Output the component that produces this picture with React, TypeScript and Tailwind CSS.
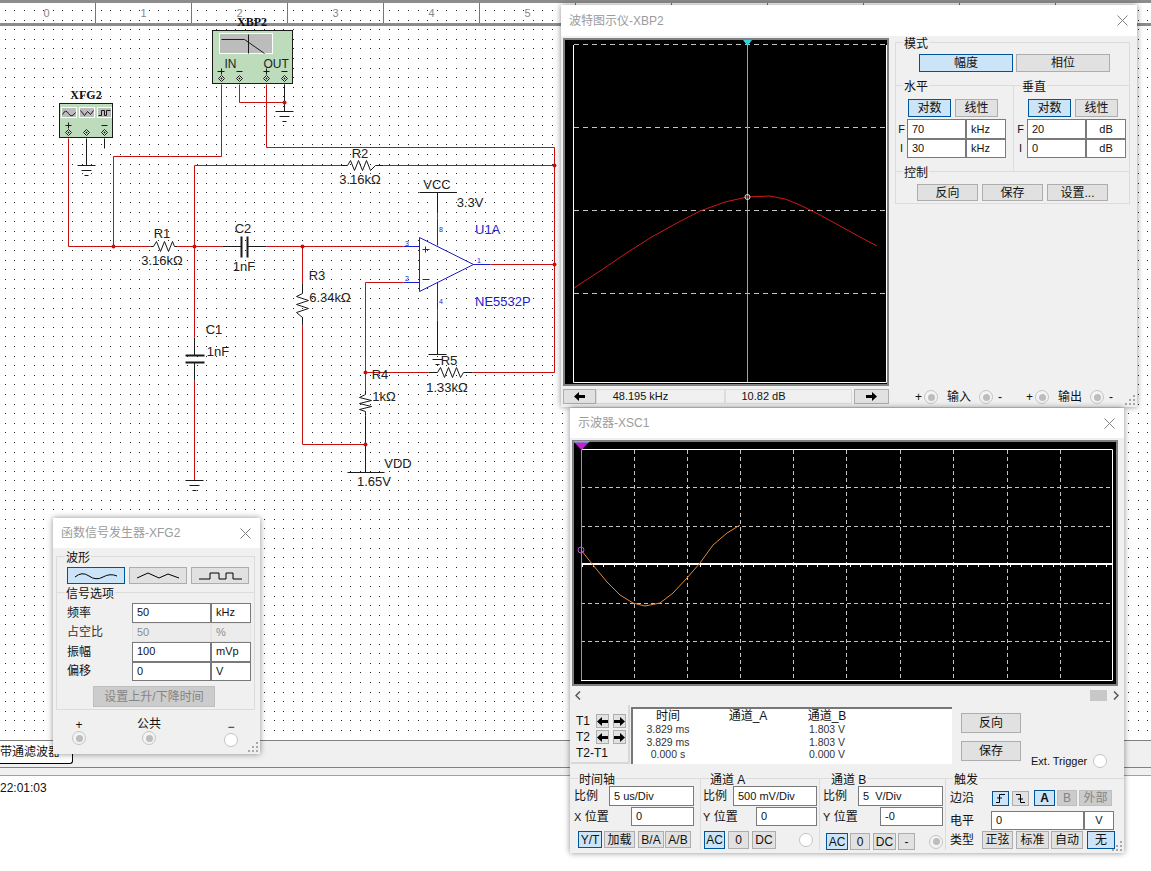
import type { ReactNode } from 'react';

const RED = '#c80f0f';
const INK = '#1a1a1a';
const BLUE = '#1c1cc8';

function Wire({ d, c = RED, w = 1 }: { d: string; c?: string; w?: number }) {
    return <path d={d} fill="none" stroke={c} strokeWidth={w} />;
}

function Dot({ x, y }: { x: number; y: number }) {
    return <circle cx={x} cy={y} r={2} fill={RED} />;
}

function Ground({ x, y, w = 9 }: { x: number; y: number; w?: number }) {
    return <Wire c={INK} d={`M${x - w} ${y}H${x + w}M${Math.round(x - w * 0.6)} ${y + 5}H${Math.round(x + w * 0.6)}M${Math.round(x - w * 0.25)} ${y + 10}H${Math.round(x + w * 0.25)}`} />;
}

function Label({ x, y, children, c, anchor = 'middle' }: { x: number; y: number; children: ReactNode; c?: 'blue'; anchor?: 'middle' | 'start' }) {
    return (
        <text x={x} y={y} textAnchor={anchor} className={c === 'blue' ? 'fill-[#1c1cc8] text-[13px]' : 'fill-[#222222] text-[13px]'}>
            {children}
        </text>
    );
}

function Pin({ x, y }: { x: number; y: number }) {
    return (
        <g>
            <path d={`M${x} ${y - 3}L${x + 3} ${y}L${x} ${y + 3}L${x - 3} ${y}Z`} fill="#d8ead8" stroke={INK} strokeWidth={1} />
            <circle cx={x} cy={y} r={1} fill={INK} />
        </g>
    );
}

const DOT_X = [5, 14, 24, 34, 43];
const DOT_Y = [0, 10, 20, 29, 39];

// the schematic, drawn in page coordinates
function Schematic() {
    return (
        <svg className="absolute left-0 top-0 w-[1151px] h-[740px]" viewBox="0 0 1151 740">
            <defs>
                <pattern id="grid" width={48} height={48} patternUnits="userSpaceOnUse">
                    {DOT_X.flatMap((x) => DOT_Y.map((y) => <rect key={`${x}-${y}`} x={x} y={y} width={1} height={1} fill="#222222" />))}
                </pattern>
            </defs>
            <rect x={0} y={3} width={1151} height={20} fill="url(#grid)" />
            <rect x={0} y={26} width={1151} height={714} fill="url(#grid)" />

            {/* half pixel shift keeps the 1px strokes crisp */}
            <g transform="translate(0.5 0.5)">
                {/* XBP2 */}
                <rect x={212} y={30} width={80} height={53} fill="#bcdcbc" stroke={INK} />
                <rect x={219} y={33} width={53} height={20} fill="#bcbcbc" stroke="#ffffff" />
                <Wire c={INK} d="M221 39H244L264 53M248 34V53" />
                <text x={224} y={67} className="fill-[#222222] text-[12px]">IN</text>
                <text x={263} y={67} className="fill-[#222222] text-[12px]">OUT</text>
                <Wire c={INK} d="M217 71H224M221 68V74M236 71H242M263 71H269M266 68V74M281 71H287" />

                {/* XFG2 */}
                <rect x={59} y={103} width={53} height={34} fill="#bcdcbc" stroke={INK} />
                <rect x={61} y={107} width={15} height={10} fill="#bcbcbc" stroke="#ffffff" />
                <rect x={79} y={107} width={15} height={10} fill="#bcbcbc" stroke="#ffffff" />
                <rect x={97} y={107} width={14} height={10} fill="#bcbcbc" stroke="#ffffff" />
                <Wire c={INK} d="M62 114Q65 108 68 113T75 112M80 110L84 115L87 111L90 114L93 110M98 115H101V110H104V115H106V110H110" />
                <Wire c={INK} d="M65 125H71M68 122V128M101 125H107" />

                {/* red nets */}
                <Wire d="M68 138V246H150M177 246H222M266 246H403M113 246V156H221V84" />
                <Wire d="M266 84V147H554V372H472" />
                <Wire d="M194 246V165H340M383 165H554M490 264H554" />
                <Wire d="M239 84V102H284" />
                <Wire d="M194 246V337M194 380V480" />
                <Wire d="M302 246V283M302 325V444H365" />
                <Wire d="M403 282H365V372H428M365 372V390" />
                <Wire d="M437 213V218M437 310V320" />
                {/* black leads */}
                <Wire c={INK} d="M284 84V111M86 138V165M104 138V148M437 192V213M437 320V354" />
                <Wire c={INK} d="M419 192H456M347 472H384M365 415V472" />
                <Wire c={INK} d="M150 246H153M174 246H177M222 246H241M247 246H266M340 165H347M375 165H383M428 372H437M463 372H472" />
                <Wire c={INK} d="M194 337V355M194 362V380M302 283V293M302 317V325M365 390V394M365 411V415" />
                {/* resistors */}
                <Wire c={INK} d="M153 246L156 241L160 251L164 241L168 251L172 241L174 246" />
                <Wire c={INK} d="M347 165L350 160L354 170L358 160L362 170L366 160L370 170L375 165" />
                <Wire c={INK} d="M437 372L440 367L444 377L448 367L452 377L456 367L460 377L463 372" />
                <Wire c={INK} d="M302 293L296 296L308 300L296 304L308 308L296 312L302 317" />
                <Wire c={INK} d="M365 394L359 397L371 400L359 403L371 406L359 409L365 411" />
                {/* capacitors */}
                <Wire c={INK} w={2} d="M241 236V257M247 236V257M185 355H204M185 362H204" />
                {/* grounds */}
                <Ground x={284} y={111} />
                <Ground x={86} y={165} />
                <Ground x={194} y={480} />
                <Ground x={437} y={354} />
                {/* op amp */}
                <path d="M419 237V291L473 264Z" fill="none" stroke={BLUE} strokeWidth={1} />
                <Wire c={BLUE} d="M403 246H419M403 282H419M473 264H490M437 218V245M437 282V310M422 249H429M425 246V252M422 279H429" />
                {[[113, 246], [194, 246], [302, 246], [284, 102], [554, 165], [554, 264], [365, 372], [365, 444]].map(([x, y]) => (
                    <Dot key={`${x}-${y}`} x={x} y={y} />
                ))}
                <Pin x={221} y={78} />
                <Pin x={239} y={78} />
                <Pin x={266} y={78} />
                <Pin x={284} y={78} />
                <Pin x={68} y={132} />
                <Pin x={86} y={132} />
                <Pin x={104} y={132} />
            </g>

            <text x={405} y={246} className="fill-[#1c1cc8] text-[7px]">3</text>
            <text x={405} y={281} className="fill-[#1c1cc8] text-[7px]">2</text>
            <text x={477} y={263} className="fill-[#1c1cc8] text-[7px]">1</text>
            <text x={439} y={232} className="fill-[#1c1cc8] text-[7px]">8</text>
            <text x={439} y={304} className="fill-[#1c1cc8] text-[7px]">4</text>
            <text x={252} y={26} textAnchor="middle" className="fill-[#111111] text-[12px] font-bold [font-family:'Liberation_Serif',serif]">XBP2</text>
            <text x={86} y={99} textAnchor="middle" className="fill-[#111111] text-[12px] font-bold [font-family:'Liberation_Serif',serif]">XFG2</text>

            <Label x={162} y={238}>R1</Label>
            <Label x={162} y={265}>3.16kΩ</Label>
            <Label x={360} y={158}>R2</Label>
            <Label x={360} y={184}>3.16kΩ</Label>
            <Label x={437} y={189}>VCC</Label>
            <Label x={470} y={207}>3.3V</Label>
            <Label x={475} y={234} anchor="start" c="blue">U1A</Label>
            <Label x={475} y={306} anchor="start" c="blue">NE5532P</Label>
            <Label x={243} y={233}>C2</Label>
            <Label x={244} y={271}>1nF</Label>
            <Label x={317} y={280}>R3</Label>
            <Label x={330} y={302}>6.34kΩ</Label>
            <Label x={214} y={334}>C1</Label>
            <Label x={218} y={356}>1nF</Label>
            <Label x={449} y={365}>R5</Label>
            <Label x={447} y={392}>1.33kΩ</Label>
            <Label x={380} y={379}>R4</Label>
            <Label x={384} y={401}>1kΩ</Label>
            <Label x={398} y={468}>VDD</Label>
            <Label x={374} y={486}>1.65V</Label>
        </svg>
    );
}

function Btn({ active, disabled, className, children }: { active?: boolean; disabled?: boolean; className: string; children?: ReactNode }) {
    const tone = active
        ? 'bg-[#cce4f7] border-[#005499]'
        : disabled
          ? 'bg-[#cccccc] border-[#bfbfbf] text-[#858585]'
          : 'bg-[#e1e1e1] border-[#adadad]';
    return <div className={`flex items-center justify-center border shrink-0 text-[12px] leading-none ${tone} ${className}`}>{children}</div>;
}

function Box({ className, children, disabled, center }: { className: string; children?: ReactNode; disabled?: boolean; center?: boolean }) {
    return (
        <div
            className={`flex items-center shrink-0 border text-[11px] leading-none ${center ? 'justify-center' : 'pl-[4px]'} ${
                disabled ? 'bg-[#ececec] border-[#e4e4e4] text-[#8d8d8d]' : 'bg-white border-[#7a7a7a]'
            } ${className}`}
        >
            {children}
        </div>
    );
}

function Term({ on = true }: { on?: boolean }) {
    return (
        <div className={`flex items-center justify-center w-[14px] h-[14px] shrink-0 rounded-full border border-[#c4c4c4] ${on ? 'bg-[#f3f3f3]' : 'bg-white'}`}>
            {on && <div className="w-[7px] h-[7px] rounded-full bg-[#bdbdbd]" />}
        </div>
    );
}

function GroupLabel({ children, className = '' }: { children: ReactNode; className?: string }) {
    return <div className={`w-fit h-[14px] -mt-[6px] px-[1px] bg-[#f0f0f0] text-[12px] leading-[14px] ${className}`}>{children}</div>;
}

function Grip() {
    return (
        <svg className="absolute right-[1px] bottom-[1px] w-[12px] h-[12px]" viewBox="0 0 12 12">
            <path d="M9 1h2v2H9zM5 5h2v2H5zM9 5h2v2H9zM1 9h2v2H1zM5 9h2v2H5zM9 9h2v2H9z" fill="#a8a8a8" />
        </svg>
    );
}

function TitleBar({ title, h }: { title: string; h: string }) {
    return (
        <div className={`flex items-center justify-between shrink-0 bg-white pl-[8px] pr-[9px] text-[12px] text-[#9b9b9b] ${h}`}>
            <span>{title}</span>
            <svg className="w-[11px] h-[11px]" viewBox="0 0 11 11">
                <path d="M0.500 0.500L10.500 10.500M10.500 0.500L0.500 10.500" stroke="#808080" strokeWidth={1} />
            </svg>
        </div>
    );
}

function Arrow({ right }: { right?: boolean }) {
    return (
        <svg className="w-[11px] h-[9px]" viewBox="0 0 11 9">
            <path d={right ? 'M0 3H6V0L11 4.500L6 9V6H0Z' : 'M11 3H5V0L0 4.500L5 9V6H11Z'} fill="#000000" />
        </svg>
    );
}

function BodePlot() {
    return (
        <svg className="w-[326px] h-[348px] block" viewBox="563 38 326 348">
            <rect x={564} y={39} width={324} height={346} fill="#000000" stroke="#808080" strokeWidth={2} />
            <path d="M573.500 45V382.500H886.500V45" fill="none" stroke="#ffffff" />
            <path d="M574 44.500H886M574 127.500H886M574 210.500H886M574 293.500H886" stroke="#c4c4c4" strokeDasharray="5 4" />
            <path d="M747.500 42V382" stroke="#35cfe0" />
            <path d="M743 40H752L747.500 46Z" fill="#35cfe0" />
            <polyline
                points="574,288 600,271 625,254 650,238 675,224 700,211 725,202 747,197 770,196 785,199 800,205 820,215 840,226 860,237 877,246"
                fill="none"
                stroke="#d01818"
            />
            <circle cx={747.500} cy={197} r={2.500} fill="none" stroke="#cfeef2" />
        </svg>
    );
}

function ScopePlot() {
    const vx = [634, 687, 740, 793, 846, 900, 953, 1007, 1060];
    const hy = [487, 526, 603, 641];
    const ticks = Array.from({ length: 50 }, (_, i) => Math.round(582 + i * 10.7) + 0.5);
    return (
        <svg className="w-[546px] h-[246px] block" viewBox="572 440 546 246">
            <rect x={573} y={441} width={544} height={244} fill="#000000" stroke="#808080" strokeWidth={2} />
            <path d="M581 449.500H1112.500V680.500H581" fill="none" stroke="#ffffff" />
            {vx.map((x) => (
                <path key={x} d={`M${x + 0.5} 450V680`} stroke="#c4c4c4" strokeDasharray="4 3" />
            ))}
            {hy.map((y) => (
                <path key={y} d={`M581 ${y + 0.5}H1112`} stroke="#c4c4c4" strokeDasharray="4 3" />
            ))}
            <path d="M581 564H1112" stroke="#ffffff" strokeWidth={2} />
            {ticks.map((x) => (
                <path key={x} d={`M${x} 565V567`} stroke="#ffffff" />
            ))}
            <path d="M581.500 442V680" stroke="#3fd24a" />
            <polyline
                points="581,550 593,565 607,582 620,595 633,603 645,606 660,603 673,593 687,578 700,563 713,545 727,533 740,525"
                fill="none"
                stroke="#e58a33"
            />
            <circle cx={581} cy={550} r={3} fill="none" stroke="#c050d8" />
            <path d="M573 441H590L581.500 450Z" fill="#c21fd0" />
            <path d="M573 441H590L589 442.500H574Z" fill="#57c7d6" />
        </svg>
    );
}

function BodeWindow() {
    return (
        <div className="absolute left-[561px] top-[5px] w-[576px] h-[402px] flex flex-col bg-[#f0f0f0] shadow-[0_0_6px_rgba(0,0,0,0.45)]">
            <TitleBar title="波特图示仪-XBP2" h="h-[31px]" />
            <div className="flex flex-1 mt-[2px]">
                <div className="w-[330px] pl-[2px] shrink-0">
                    <BodePlot />
                    <div className="flex items-center h-[17px] mt-[2px] text-[11px]">
                        <Btn className="w-[33px] h-[15px]">
                            <Arrow />
                        </Btn>
                        <div className="w-[129px] h-[15px] pr-[40px] flex items-center justify-center border border-[#dcdcdc]">48.195 kHz</div>
                        <div className="w-[127px] h-[15px] pr-[50px] flex items-center justify-center border border-[#dcdcdc]">10.82 dB</div>
                        <Btn className="w-[35px] h-[15px] ml-[2px]">
                            <Arrow right />
                        </Btn>
                    </div>
                </div>
                <div className="flex flex-col flex-1 pl-[4px]">
                    <div className="w-[235px] h-[162px] mt-[4px] border border-[#dcdcdc] flex flex-col">
                        <div className="flex flex-col h-[43px] border-b border-[#dcdcdc]">
                            <GroupLabel className="ml-[7px]">模式</GroupLabel>
                            <div className="flex gap-[3px] pl-[23px] mt-[3px]">
                                <Btn active className="w-[94px] h-[18px]">幅度</Btn>
                                <Btn className="w-[94px] h-[18px]">相位</Btn>
                            </div>
                        </div>
                        <div className="flex h-[86px] border-b border-[#dcdcdc]">
                            <div className="w-[118px] border-r border-[#dcdcdc]">
                                <GroupLabel className="ml-[7px]">水平</GroupLabel>
                                <div className="flex gap-[4px] pl-[12px] mt-[5px]">
                                    <Btn active className="w-[43px] h-[18px]">对数</Btn>
                                    <Btn className="w-[43px] h-[18px]">线性</Btn>
                                </div>
                                <div className="flex items-center mt-[2px] text-[11px]">
                                    <span className="w-[11px] text-center">F</span>
                                    <Box className="w-[59px] h-[20px]">70</Box>
                                    <Box className="w-[40px] h-[20px]">kHz</Box>
                                </div>
                                <div className="flex items-center text-[11px]">
                                    <span className="w-[11px] text-center">I</span>
                                    <Box className="w-[59px] h-[19px]">30</Box>
                                    <Box className="w-[40px] h-[19px]">kHz</Box>
                                </div>
                            </div>
                            <div className="flex-1">
                                <GroupLabel className="ml-[7px]">垂直</GroupLabel>
                                <div className="flex gap-[4px] pl-[14px] mt-[5px]">
                                    <Btn active className="w-[43px] h-[18px]">对数</Btn>
                                    <Btn className="w-[43px] h-[18px]">线性</Btn>
                                </div>
                                <div className="flex items-center mt-[2px] text-[11px]">
                                    <span className="w-[13px] text-center">F</span>
                                    <Box className="w-[59px] h-[20px]">20</Box>
                                    <Box center className="w-[40px] h-[20px]">dB</Box>
                                </div>
                                <div className="flex items-center text-[11px]">
                                    <span className="w-[13px] text-center">I</span>
                                    <Box className="w-[59px] h-[19px]">0</Box>
                                    <Box center className="w-[40px] h-[19px]">dB</Box>
                                </div>
                            </div>
                        </div>
                        <GroupLabel className="ml-[7px]">控制</GroupLabel>
                        <div className="flex gap-[4px] pl-[21px] mt-[4px]">
                            <Btn className="w-[61px] h-[17px]">反向</Btn>
                            <Btn className="w-[61px] h-[17px]">保存</Btn>
                            <Btn className="w-[61px] h-[17px]">设置...</Btn>
                        </div>
                    </div>
                    <div className="flex items-center h-[16px] mt-[185px] text-[12px]">
                        <span className="ml-[20px] w-[9px]">+</span>
                        <Term />
                        <span className="ml-[9px] w-[30px]">输入</span>
                        <span className="ml-[2px]"><Term /></span>
                        <span className="ml-[5px] w-[16px]">-</span>
                        <span className="ml-[12px] w-[9px]">+</span>
                        <Term />
                        <span className="ml-[9px] w-[30px]">输出</span>
                        <span className="ml-[2px]"><Term /></span>
                        <span className="ml-[5px]">-</span>
                    </div>
                </div>
            </div>
            <Grip />
        </div>
    );
}

function ScopeWindow() {
    return (
        <div className="absolute left-[570px] top-[408px] w-[554px] h-[445px] flex flex-col bg-[#f0f0f0] shadow-[0_0_6px_rgba(0,0,0,0.45)]">
            <TitleBar title="示波器-XSC1" h="h-[30px]" />
            <div className="pl-[2px] mt-[2px]">
                <ScopePlot />
            </div>
            <div className="flex items-center h-[17px] mt-[1px] pl-[5px] pr-[5px] text-[#555555]">
                <svg className="w-[6px] h-[9px]" viewBox="0 0 6 9">
                    <path d="M5 0.500L1 4.500L5 8.500" fill="none" stroke="#555555" strokeWidth={1.500} />
                </svg>
                <div className="ml-auto w-[17px] h-[11px] bg-[#c8c8c8]" />
                <svg className="w-[6px] h-[9px] ml-[6px]" viewBox="0 0 6 9">
                    <path d="M1 0.500L5 4.500L1 8.500" fill="none" stroke="#555555" strokeWidth={1.500} />
                </svg>
            </div>
            <div className="flex h-[61px] text-[12px]">
                <div className="w-[59px] h-[59px] ml-[1px] mt-[1px] border-r-2 border-b-2 border-[#d8d8d8] pl-[5px] pt-[8px] shrink-0">
                    <div className="flex items-center h-[16px]">
                        <span className="w-[20px]">T1</span>
                        <Btn className="w-[13px] h-[14px]"><Arrow /></Btn>
                        <Btn className="w-[13px] h-[14px] ml-[4px]"><Arrow right /></Btn>
                    </div>
                    <div className="flex items-center h-[16px]">
                        <span className="w-[20px]">T2</span>
                        <Btn className="w-[13px] h-[14px]"><Arrow /></Btn>
                        <Btn className="w-[13px] h-[14px] ml-[4px]"><Arrow right /></Btn>
                    </div>
                    <div className="mt-[1px] h-[14px] leading-[14px]">T2-T1</div>
                </div>
                <div className="w-[321px] h-[57px] ml-[1px] mt-[3px] bg-white border-l-2 border-t-2 border-[#777777] grid grid-cols-[70px_90px_68px_1fr] grid-rows-[14px_13px_12px_13px] text-[10.500px] leading-[13px] text-center text-[#333333]">
                    <span className="text-[12px] leading-[14px] text-[#111111]">时间</span>
                    <span className="text-[12px] leading-[14px] text-[#111111]">通道_A</span>
                    <span className="text-[12px] leading-[14px] text-[#111111]">通道_B</span>
                    <span />
                    <span>3.829 ms</span>
                    <span />
                    <span>1.803 V</span>
                    <span />
                    <span>3.829 ms</span>
                    <span />
                    <span>1.803 V</span>
                    <span />
                    <span>0.000 s</span>
                    <span />
                    <span>0.000 V</span>
                    <span />
                </div>
                <div className="ml-[9px] mt-[9px] flex flex-col gap-[8px]">
                    <Btn className="w-[60px] h-[20px]">反向</Btn>
                    <Btn className="w-[60px] h-[20px]">保存</Btn>
                </div>
                <div className="ml-[10px] self-end mb-[-4px] flex items-center text-[11px] whitespace-nowrap">
                    Ext. Trigger
                    <span className="ml-[6px]"><Term on={false} /></span>
                </div>
            </div>
            <div className="flex h-[72px] mt-[13px] text-[12px]">
                <div className="w-[131px] border-t border-r border-[#dcdcdc] pl-[4px]">
                    <GroupLabel className="ml-[4px]">时间轴</GroupLabel>
                    <div className="flex items-center -mt-[1px]">
                        <span className="w-[35px]">比例</span>
                        <Box className="w-[85px] h-[20px]">5 us/Div</Box>
                    </div>
                    <div className="flex items-center mt-[1px]">
                        <span className="w-[57px]"><span className="text-[11px]">X</span> 位置</span>
                        <Box className="w-[63px] h-[19px]">0</Box>
                    </div>
                    <div className="flex mt-[5px] ml-[4px]">
                        <Btn active className="w-[24px] h-[17px] text-[11px]">Y/T</Btn>
                        <Btn className="w-[31px] h-[17px] ml-[2px]">加载</Btn>
                        <Btn className="w-[26px] h-[17px] ml-[3px] text-[11px]">B/A</Btn>
                        <Btn className="w-[26px] h-[17px] ml-[1px] text-[11px]">A/B</Btn>
                    </div>
                </div>
                <div className="w-[119px] border-t border-r border-[#dcdcdc] pl-[2px]">
                    <GroupLabel className="ml-[6px]">通道 A</GroupLabel>
                    <div className="flex items-center -mt-[1px]">
                        <span className="w-[30px]">比例</span>
                        <Box className="w-[84px] h-[20px]">500 mV/Div</Box>
                    </div>
                    <div className="flex items-center mt-[1px]">
                        <span className="w-[53px]"><span className="text-[11px]">Y</span> 位置</span>
                        <Box className="w-[61px] h-[19px]">0</Box>
                    </div>
                    <div className="flex items-center mt-[5px] ml-[1px]">
                        <Btn active className="w-[21px] h-[18px] text-[11px]">AC</Btn>
                        <Btn className="w-[21px] h-[18px] ml-[3px] text-[11px]">0</Btn>
                        <Btn className="w-[24px] h-[18px] ml-[3px] text-[11px]">DC</Btn>
                        <span className="ml-[23px]"><Term on={false} /></span>
                    </div>
                </div>
                <div className="w-[126px] border-t border-r border-[#dcdcdc] pl-[3px]">
                    <GroupLabel className="ml-[7px]">通道 B</GroupLabel>
                    <div className="flex items-center -mt-[1px]">
                        <span className="w-[35px]">比例</span>
                        <Box className="w-[85px] h-[20px]">5&nbsp;&nbsp;V/Div</Box>
                    </div>
                    <div className="flex items-center mt-[1px]">
                        <span className="w-[57px]"><span className="text-[11px]">Y</span> 位置</span>
                        <Box className="w-[63px] h-[19px]">-0</Box>
                    </div>
                    <div className="flex items-center mt-[7px] ml-[3px]">
                        <Btn active className="w-[22px] h-[17px] text-[11px]">AC</Btn>
                        <Btn className="w-[20px] h-[17px] ml-[2px] text-[11px]">0</Btn>
                        <Btn className="w-[23px] h-[17px] ml-[3px] text-[11px]">DC</Btn>
                        <Btn className="w-[17px] h-[17px] ml-[2px] text-[11px]">-</Btn>
                        <span className="ml-[14px]"><Term /></span>
                    </div>
                </div>
                <div className="flex-1 border-t border-[#dcdcdc] pl-[4px]">
                    <GroupLabel className="ml-[3px]">触发</GroupLabel>
                    <div className="flex items-center mt-[2px]">
                        <span className="w-[42px]">边沿</span>
                        <Btn active className="w-[17px] h-[15px]">
                            <svg className="w-[9px] h-[9px]" viewBox="0 0 9 9">
                                <path d="M0 8.500H3.500V0.500H9M1 4H6" fill="none" stroke="#000000" />
                            </svg>
                        </Btn>
                        <Btn className="w-[17px] h-[15px] ml-[3px]">
                            <svg className="w-[9px] h-[9px]" viewBox="0 0 9 9">
                                <path d="M0 0.500H4.500V8.500H9M2 5H7" fill="none" stroke="#000000" />
                            </svg>
                        </Btn>
                        <Btn active className="w-[21px] h-[16px] ml-[5px] text-[11px] font-bold">A</Btn>
                        <Btn disabled className="w-[20px] h-[16px] ml-[2px] text-[11px]">B</Btn>
                        <Btn disabled className="w-[33px] h-[16px] ml-[2px]">外部</Btn>
                    </div>
                    <div className="flex items-center mt-[4px]">
                        <span className="w-[41px]">电平</span>
                        <Box className="w-[93px] h-[19px]">0</Box>
                        <Box center className="w-[30px] h-[19px]">V</Box>
                    </div>
                    <div className="flex items-center mt-[1px]">
                        <span className="w-[32px]">类型</span>
                        <Btn className="w-[31px] h-[18px]">正弦</Btn>
                        <Btn className="w-[33px] h-[18px] ml-[3px]">标准</Btn>
                        <Btn className="w-[32px] h-[18px] ml-[2px]">自动</Btn>
                        <Btn active className="w-[28px] h-[18px] ml-[4px]">无</Btn>
                    </div>
                </div>
            </div>
            <Grip />
        </div>
    );
}

function Wave({ d }: { d: string }) {
    return (
        <svg className="w-[46px] h-[10px]" viewBox="0 0 46 10">
            <path d={d} fill="none" stroke="#000000" />
        </svg>
    );
}

function GenRow({ label, value, unit, disabled }: { label: string; value: string; unit: string; disabled?: boolean }) {
    return (
        <div className={`flex items-center h-[19.500px] pl-[10px] ${disabled ? 'text-[#333333]' : ''}`}>
            <span className="w-[65px]">{label}</span>
            <Box disabled={disabled} className="w-[79px] h-[19.500px]">{value}</Box>
            <Box disabled={disabled} className="w-[40px] h-[19.500px]">{unit}</Box>
        </div>
    );
}

function GeneratorWindow() {
    return (
        <div className="absolute left-[53px] top-[518px] w-[207px] h-[236px] flex flex-col bg-[#f0f0f0] text-[12px] shadow-[0_0_6px_rgba(0,0,0,0.45)]">
            <TitleBar title="函数信号发生器-XFG2" h="h-[30px]" />
            <div className="w-[199px] h-[154px] mt-[8px] ml-[3px] border border-[#dcdcdc]">
                <GroupLabel className="ml-[8px]">波形</GroupLabel>
                <div className="flex gap-[4px] pl-[10px] mt-[2px]">
                    <Btn active className="w-[58px] h-[17px]">
                        <Wave d="M2 6Q9 0 16 5T30 6T44 5" />
                    </Btn>
                    <Btn className="w-[58px] h-[17px]">
                        <Wave d="M2 7L13 2L24 7L33 3L44 7" />
                    </Btn>
                    <Btn className="w-[58px] h-[17px]">
                        <Wave d="M2 8H13V2H22V8H29V2H36V8H45" />
                    </Btn>
                </div>
                <div className="mt-[8px] border-t border-[#dcdcdc]">
                    <GroupLabel className="ml-[8px]">信号选项</GroupLabel>
                    <div className="mt-[2px]">
                        <GenRow label="频率" value="50" unit="kHz" />
                        <GenRow label="占空比" value="50" unit="  %" disabled />
                        <GenRow label="振幅" value="100" unit="mVp" />
                        <GenRow label="偏移" value="0" unit=" V" />
                    </div>
                    <Btn disabled className="w-[122px] h-[21px] ml-[36px] mt-[5px]">设置上升/下降时间</Btn>
                </div>
            </div>
            <div className="flex items-end h-[35px]">
                <div className="flex flex-col items-center w-[20px] ml-[16px]">
                    <span className="h-[11px] leading-[10px]">+</span>
                    <Term />
                </div>
                <div className="flex flex-col items-center w-[40px] ml-[40px] whitespace-nowrap">
                    <span className="h-[13px] leading-[12px]">公共</span>
                    <Term />
                </div>
                <div className="flex flex-col items-center w-[20px] ml-[52px] -mb-[2px]">
                    <span className="h-[10px] leading-[8px]">−</span>
                    <Term on={false} />
                </div>
            </div>
            <Grip />
        </div>
    );
}

export default function App() {
    const ticks = ['0', '1', '2', '3', '4', '5', '', '', '', '', '', ''];
    return (
        <div className="relative w-[1151px] h-[871px] overflow-hidden bg-white text-[#111111] [font-family:'Liberation_Sans','Noto_Sans_CJK_SC',sans-serif]">
            <div className="h-[3px] bg-[#8c8c8c]" />
            <div className="flex h-[20px]">
                {ticks.map((t, i) => (
                    <div key={i} className={`flex items-center justify-center shrink-0 h-full w-[96px] border-r border-[#777777] text-[11px] text-[#888888] ${i === 0 ? 'pr-[2px]' : ''}`}>
                        {t}
                    </div>
                ))}
            </div>
            <div className="h-[3px] bg-[#8c8c8c]" />
            <div className="h-[714px]" />
            <div className="h-[28px] bg-[#f0f0f0] border-t border-b border-[#808080] overflow-hidden">
                <div className="flex items-center w-[73px] h-[23px] bg-white border-r border-b border-black rounded-br-[3px] text-[12px] whitespace-nowrap overflow-hidden">
                    带通滤波器
                </div>
            </div>
            <div className="h-[8px] bg-[#f0f0f0] border-b border-[#a0a0a0]" />
            <div className="pt-[5px] text-[12px] leading-[14px]">22:01:03</div>

            <Schematic />
            <GeneratorWindow />
            <BodeWindow />
            <ScopeWindow />
        </div>
    );
}
